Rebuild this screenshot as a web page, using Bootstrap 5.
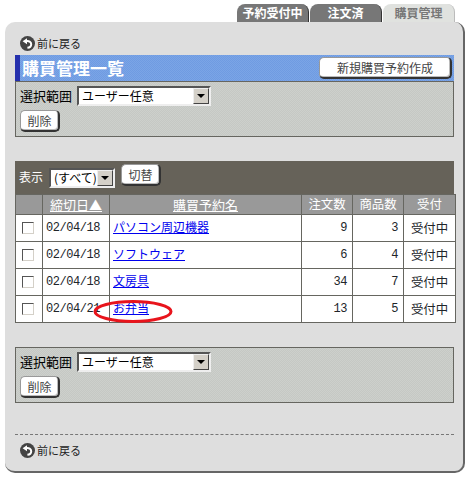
<!DOCTYPE html>
<html lang="ja">

<head>
    <meta charset="UTF-8">
    <meta name="viewport" content="width=device-width, initial-scale=1.0">
    <title>購買管理一覧</title>
    <link href="https://cdn.jsdelivr.net/npm/bootstrap@5.3.0/dist/css/bootstrap.min.css" rel="stylesheet">
    <style>
        body {
            background: #fff;
            color: #000;
            font-family: "Liberation Mono", "Noto Sans CJK JP", monospace;
            font-size: 12px;
            line-height: 1.2;
        }

        .tab-strip {
            height: 22px;
            padding: 4px 14px 0 0;
            gap: 1px;
        }

        .tab-item {
            width: 72px;
            height: 18px;
            background: #777;
            color: #fff;
            font-family: "Noto Sans CJK JP", sans-serif;
            font-weight: 700;
            font-size: 12px;
            line-height: 18px;
            text-align: center;
            border-right: 1px solid #333;
            border-radius: 8px 8px 0 0;
        }

        .tab-item.is-current {
            background: #e0e2df;
            color: #777;
            border-right-color: #bbb;
        }

        .main-panel {
            width: 460px;
            height: 451px;
            margin-left: 5px;
            padding: 14px 9px 0 10px;
            background: #dedede;
            border-right: 2px solid #666;
            border-bottom: 2px solid #666;
            border-radius: 10px;
        }

        .back-row {
            height: 15px;
            padding-left: 5px;
            gap: 2px;
            font-family: "Noto Sans CJK JP", sans-serif;
            font-size: 11px;
            color: #222;
        }

        .title-bar {
            height: 26px;
            margin-top: 4px;
            padding: 0 2px 0 2px;
            background: repeating-conic-gradient(#6f9be2 0 25%, #7ba5e6 0 50%) 0 0 / 2px 2px;
            border-left: 5px solid #2530ad;
        }

        .title-text {
            color: #fff;
            font-family: "Noto Sans CJK JP", sans-serif;
            font-weight: 700;
            font-size: 17px;
        }

        .old-btn {
            padding: 0;
            background: #fff;
            color: #444;
            font-family: "Noto Sans CJK JP", sans-serif;
            font-size: 12px;
            line-height: 1;
            border: 1px solid;
            border-color: #999 #333 #333 #999;
            border-right-width: 2px;
            border-bottom-width: 2px;
            border-radius: 5px;
            box-shadow: inset -1px -1px 0 #bbb;
        }

        .btn-new {
            width: 133px;
            height: 22px;
        }

        .btn-small {
            width: 40px;
            height: 22px;
        }

        .range-panel {
            height: 56px;
            padding: 4px 4px 0 4px;
            background: repeating-conic-gradient(#c5c8c4 0 25%, #cdd0cc 0 50%) 0 0 / 2px 2px;
            border: 1px solid #666660;
        }

        .range-label {
            font-family: "Noto Sans CJK JP", sans-serif;
            font-size: 13px;
            gap: 5px;
        }

        .fake-select {
            height: 20px;
            background: #fff;
            border: 2px solid;
            border-color: #555 #eee #eee #555;
        }

        .fake-select select {
            appearance: none;
            border: 0;
            outline: 0;
            padding: 0 0 0 3px;
            background: transparent;
            font-family: "Noto Sans CJK JP", sans-serif;
            font-size: 12px;
            flex-grow: 1;
            min-width: 0;
            height: 16px;
            line-height: 16px;
        }

        .select-arrow {
            width: 16px;
            height: 16px;
            flex: none;
            background: #d4d0c8;
            border: 1px solid;
            border-color: #eee #444 #444 #eee;
            position: relative;
        }

        .select-arrow::after {
            content: "";
            position: absolute;
            left: 3px;
            top: 5px;
            border: 4px solid transparent;
            border-top: 4px solid #000;
            border-bottom: 0;
        }

        .range-select {
            width: 134px;
        }

        .filter-select {
            width: 66px;
        }

        .list-head {
            height: 33px;
            margin-top: 24px;
            padding: 3px 0 0 4px;
            background: #666259;
            color: #fff;
            font-family: "Noto Sans CJK JP", sans-serif;
            gap: 6px;
        }

        .list-head .filter-label {
            margin-top: 6px;
        }

        .list-table {
            table-layout: fixed;
            width: 440px;
            --bs-table-bg: #fff;
            --bs-table-border-color: #666660;
            margin: 0;
        }

        .list-table th,
        .list-table td {
            border: 1px solid #666660;
            padding: 0 5px 0 3px;
            height: 27px;
            font-size: 12px;
            letter-spacing: -0.45px;
            font-weight: 400;
            vertical-align: middle;
            white-space: nowrap;
            box-shadow: none;
        }

        .list-table th {
            height: 20px;
            padding: 0;
            background: #999;
            color: #fff;
            letter-spacing: 0;
            text-align: center;
            font-family: "Noto Sans CJK JP", sans-serif;
            font-size: 12.4px;
        }

        .list-table th a {
            color: #fff;
            font-size: 13px;
        }

        .list-table td a {
            color: #00e;
            font-family: "Noto Sans CJK JP", sans-serif;
            font-size: 12px;
            letter-spacing: 0;
        }

        .box-check {
            display: block;
            width: 12px;
            height: 12px;
            margin: 0 auto;
            appearance: none;
            background: #fff;
            border: 1px solid;
            border-color: #555 #d4d0c8 #d4d0c8 #555;
        }

        .list-table td.status-cell {
            font-family: "Noto Sans CJK JP", sans-serif;
            font-size: 12.4px;
            letter-spacing: 0;
            text-align: center;
            padding: 0;
        }

        .ring-cell {
            position: relative;
        }

        .red-ring {
            position: absolute;
            left: -18px;
            top: 2px;
            width: 82px;
            height: 27px;
        }

        .range-panel-low {
            margin-top: 24px;
        }

        .dot-line {
            margin-top: 31px;
            border-top: 1px dashed #777;
        }

        .back-low {
            margin-top: 8px;
        }
    </style>
</head>

<body>

    <div class="tab-strip d-flex justify-content-end">
        <div class="tab-item">予約受付中</div>
        <div class="tab-item">注文済</div>
        <div class="tab-item is-current">購買管理</div>
    </div>

    <div class="main-panel">
        <div class="back-row d-flex align-items-center">
            <svg width="15" height="15" viewBox="0 0 15 15">
                <circle cx="7.5" cy="7.5" r="7.5" fill="#444" />
                <path d="M2.6 5.2 7 2.2V8.2Z" fill="#fff" />
                <path d="M6 5.2C9 4.6 11.2 6 11.2 8.2C11.2 10.2 9.6 11.6 7.4 11.8" fill="none" stroke="#fff" stroke-width="2" />
            </svg>
            <span>前に戻る</span>
        </div>

        <div class="title-bar d-flex align-items-center justify-content-between">
            <span class="title-text">購買管理一覧</span>
            <button class="old-btn btn-new">新規購買予約作成</button>
        </div>

        <div class="range-panel">
            <div class="range-label d-flex align-items-center">
                <span>選択範囲</span>
                <div class="fake-select range-select d-flex">
                    <select><option>ユーザー任意</option></select>
                    <span class="select-arrow"></span>
                </div>
            </div>
            <button class="old-btn btn-small mt-1">削除</button>
        </div>

        <div class="list-head d-flex">
            <span class="filter-label">表示</span>
            <div class="fake-select filter-select d-flex mt-1">
                <select><option>(すべて)</option></select>
                <span class="select-arrow"></span>
            </div>
            <button class="old-btn btn-small">切替</button>
        </div>

        <table class="table list-table">
            <colgroup>
                <col style="width: 27px">
                <col style="width: 67px">
                <col style="width: 192px">
                <col style="width: 51px">
                <col style="width: 51px">
                <col style="width: 52px">
            </colgroup>
            <thead>
                <tr>
                    <th></th>
                    <th><a href="#">締切日▲</a></th>
                    <th><a href="#">購買予約名</a></th>
                    <th>注文数</th>
                    <th>商品数</th>
                    <th>受付</th>
                </tr>
            </thead>
            <tbody>
                <tr>
                    <td><input class="box-check" type="checkbox"></td>
                    <td>02/04/18</td>
                    <td><a href="#">パソコン周辺機器</a></td>
                    <td class="text-end">9</td>
                    <td class="text-end">3</td>
                    <td class="status-cell">受付中</td>
                </tr>
                <tr>
                    <td><input class="box-check" type="checkbox"></td>
                    <td>02/04/18</td>
                    <td><a href="#">ソフトウェア</a></td>
                    <td class="text-end">6</td>
                    <td class="text-end">4</td>
                    <td class="status-cell">受付中</td>
                </tr>
                <tr>
                    <td><input class="box-check" type="checkbox"></td>
                    <td>02/04/18</td>
                    <td><a href="#">文房具</a></td>
                    <td class="text-end">34</td>
                    <td class="text-end">7</td>
                    <td class="status-cell">受付中</td>
                </tr>
                <tr>
                    <td><input class="box-check" type="checkbox"></td>
                    <td>02/04/21</td>
                    <td class="ring-cell">
                        <a href="#">お弁当</a>
                        <svg class="red-ring" viewBox="0 0 82 27">
                            <ellipse cx="41" cy="13.5" rx="38" ry="10" fill="none" stroke="#e8141c" stroke-width="3" />
                        </svg>
                    </td>
                    <td class="text-end">13</td>
                    <td class="text-end">5</td>
                    <td class="status-cell">受付中</td>
                </tr>
            </tbody>
        </table>

        <div class="range-panel range-panel-low">
            <div class="range-label d-flex align-items-center">
                <span>選択範囲</span>
                <div class="fake-select range-select d-flex">
                    <select><option>ユーザー任意</option></select>
                    <span class="select-arrow"></span>
                </div>
            </div>
            <button class="old-btn btn-small mt-1">削除</button>
        </div>

        <div class="dot-line"></div>

        <div class="back-row back-low d-flex align-items-center">
            <svg width="15" height="15" viewBox="0 0 15 15">
                <circle cx="7.5" cy="7.5" r="7.5" fill="#444" />
                <path d="M2.6 5.2 7 2.2V8.2Z" fill="#fff" />
                <path d="M6 5.2C9 4.6 11.2 6 11.2 8.2C11.2 10.2 9.6 11.6 7.4 11.8" fill="none" stroke="#fff" stroke-width="2" />
            </svg>
            <span>前に戻る</span>
        </div>
    </div>

    <script src="https://cdn.jsdelivr.net/npm/bootstrap@5.3.0/dist/js/bootstrap.bundle.min.js"></script>
</body>

</html>
